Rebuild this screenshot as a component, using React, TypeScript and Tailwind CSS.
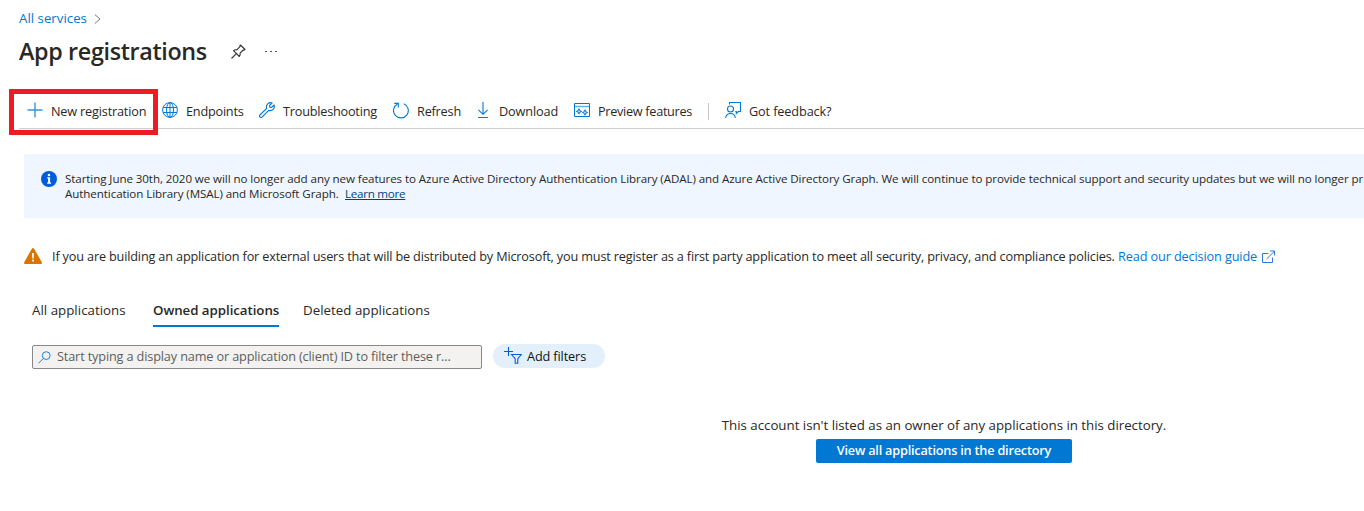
import type { ReactNode } from 'react';

type IconProps = { className?: string };

function PlusIcon() {
  return (
    <svg width="16" height="16" viewBox="0 0 16 16" stroke="#3b93dd" strokeWidth="1.4">
      <path d="M8 0.5v15M0.5 8h15" />
    </svg>
  );
}

function GlobeIcon() {
  return (
    <svg width="16" height="16" viewBox="0 0 16 16" fill="none" stroke="#0078d4" strokeWidth="1">
      <circle cx="8" cy="8" r="7.4" />
      <ellipse cx="8" cy="8" rx="3.5" ry="7.4" />
      <path d="M8 0.5v15M1.2 5.5h13.6M1.2 10.5h13.6" />
    </svg>
  );
}

function WrenchIcon() {
  return (
    <svg width="16" height="16" viewBox="0 0 16 16" fill="none" stroke="#0078d4" strokeWidth="1.1" strokeLinejoin="round">
      <path d="M13.2 0.9a4.3 4.3 0 0 0-5.5 5.5L0.9 13a1.3 1.3 0 0 0 0 1.9l0.2 0.2a1.3 1.3 0 0 0 1.9 0l6.700-6.700a4.300 4.300 0 0 0 5.400-5.500l-2.600 2.600-1.700-0.400-0.300-1.600z" />
    </svg>
  );
}

function RefreshIcon() {
  return (
    <svg width="16" height="17" viewBox="0 0 16 17" fill="none" stroke="#0078d4" strokeWidth="1.1">
      <path d="M10.8 1.7A7.4 7.4 0 1 1 4.4 2" />
      <path d="M1.3 1.4h4v4" />
    </svg>
  );
}

function DownloadIcon() {
  return (
    <svg width="16" height="16" viewBox="0 0 16 16" fill="none" stroke="#0078d4" strokeWidth="1.1">
      <path d="M8 0v12M3.4 7.8L8 12.3l4.6-4.5M3 15.5h10" />
    </svg>
  );
}

function PreviewIcon() {
  return (
    <svg width="16" height="14" viewBox="0 0 16 14" fill="none" stroke="#0078d4" strokeWidth="1">
      <path d="M0.5 0.5h15v13H0.5z" />
      <path d="M1 3.500h14" stroke="#69afe5" strokeWidth="1.500" />
      <path d="M5 5.700l0.800 1.900 1.900 0.800-1.900 0.800L5 11.100l-0.800-1.900-1.900-0.800 1.900-0.800zM11 6.800l0.800 1.900 1.900 0.800-1.900 0.800-0.800 1.900-0.800-1.900-1.900-0.800 1.900-0.800z" fill="#b4d8f3" strokeWidth="1" />
    </svg>
  );
}

function FeedbackIcon() {
  return (
    <svg width="16" height="16" viewBox="0 0 16 16" fill="none" stroke="#0078d4" strokeWidth="1.1">
      <path d="M4.5 2.5v-2h11v9h-2.2l-2 2v-2h-1" />
      <circle cx="5.5" cy="7" r="3" />
      <path d="M0.6 15.8a5 5.4 0 0 1 9.8 0" />
    </svg>
  );
}

function PinIcon() {
  return (
    <svg width="15" height="15" viewBox="0 0 15 15" fill="none" stroke="#323130" strokeWidth="1.1" strokeLinejoin="round">
      <path d="M9.5 1l4.500 4.500-0.900 0.600-0.800-0.100-3.200 3.200c0.300 1.200 0 2.400-0.800 3.300L2.500 6.700c0.900-0.800 2.100-1.100 3.300-0.800L9 2.700 8.900 1.700z" />
      <path d="M5.300 9.700L0.500 14.500" />
    </svg>
  );
}

function InfoIcon() {
  return (
    <svg className="shrink-0" width="16" height="16" viewBox="0 0 16 16">
      <circle cx="8" cy="8" r="8" fill="#015cda" />
      <circle cx="8" cy="4" r="1.25" fill="#fff" />
      <path d="M6.200 6.300h2.900v5.200h1v1.200H6.100v-1.200h1V7.500h-0.900z" fill="#fff" />
    </svg>
  );
}

function WarningIcon() {
  return (
    <svg className="shrink-0" width="18" height="16" viewBox="0 0 18 16">
      <path d="M7.900 0.700a1.300 1.300 0 0 1 2.200 0l7.700 13.500a1.200 1.200 0 0 1-1.100 1.800H1.300a1.200 1.200 0 0 1-1.100-1.800z" fill="#db7500" />
      <path d="M8 5h2l-0.300 5.600H8.300z" fill="#fff" />
      <circle cx="9" cy="12.600" r="1.050" fill="#fff" />
    </svg>
  );
}

function ExternalIcon() {
  return (
    <svg className="mt-0.5" width="14" height="14" viewBox="0 0 14 14" fill="none" stroke="#3079dc" strokeWidth="1">
      <path d="M6.500 3.500h-6v9h10V7.500M4.500 9L12.800 0.900M8 1h4.500v4.500" />
    </svg>
  );
}

function SearchIcon() {
  return (
    <svg width="13" height="13" viewBox="0 0 13 13" fill="none" stroke="#1b80d8" strokeWidth="1">
      <circle cx="8.200" cy="4.600" r="3.900" />
      <path d="M5.400 7.400L0.500 12.300" />
    </svg>
  );
}

function AddFilterIcon() {
  return (
    <svg className="-mt-0.5" width="18" height="17" viewBox="0 0 18 17" fill="none" stroke="#015cda" strokeWidth="1.100">
      <path d="M4.500 0v9M0 4.500h9" />
      <path d="M7.500 7.500h9.800l-3.500 4.200v4.500h-2.600v-4.500z" />
    </svg>
  );
}

function Chevron({ className }: IconProps) {
  return (
    <svg className={className} width="7" height="10" viewBox="0 0 7 10" fill="none" stroke="#767676">
      <path d="M0.800 0.500L6 5 0.800 9.500" />
    </svg>
  );
}

type CommandProps = { icon: ReactNode; label: string; width: string; tracking?: string };

function Command({ icon, label, width, tracking = '' }: CommandProps) {
  return (
    <button className={`flex h-6 shrink-0 items-center gap-2 whitespace-nowrap ${width}`}>
      <span className="-mt-0.5 flex w-4 shrink-0 justify-center">{icon}</span>
      <span className={tracking}>{label}</span>
    </button>
  );
}

export default function App() {
  return (
    <div className="h-[511px] w-full overflow-hidden bg-white font-['Open_Sans','Noto_Sans',sans-serif] text-[12.7px] leading-5 tracking-[-0.12px] text-[#292827]">
      <nav className="flex h-[35px] items-center pl-[19px]">
        <a className="w-[75px] whitespace-nowrap text-[13.2px] tracking-[0.04px] text-[#0078d4]">All services</a>
        <Chevron className="mt-0.5" />
      </nav>
      <header className="flex h-[33px] items-center pl-[19px]">
        <h1 className="-mt-0.5 w-[212px] whitespace-nowrap text-[23.3px] font-semibold leading-8 tracking-[-0.34px]">App registrations</h1>
        <PinIcon />
        <span className="ml-[19px] flex gap-[3.500px]">
          <i className="size-[1.500px] bg-[#555]" />
          <i className="size-[1.500px] bg-[#555]" />
          <i className="size-[1.500px] bg-[#555]" />
        </span>
      </header>

      <div className="relative mt-[21px] h-[46px] pl-[19px]">
        <div className="flex h-10 items-center border-b border-[#d2d0ce] pl-2 pt-[5px]">
          <Command icon={<PlusIcon />} label="New registration" width="w-[135px]" tracking="tracking-[-0.18px]" />
          <Command icon={<GlobeIcon />} label="Endpoints" width="w-[97px]" tracking="tracking-[-0.22px]" />
          <Command icon={<WrenchIcon />} label="Troubleshooting" width="w-[134px]" tracking="tracking-[-0.22px]" />
          <Command icon={<RefreshIcon />} label="Refresh" width="w-[82px]" tracking="tracking-[-0.2px]" />
          <Command icon={<DownloadIcon />} label="Download" width="w-[99px]" />
          <Command icon={<PreviewIcon />} label="Preview features" width="w-[134px]" tracking="tracking-[-0.3px]" />
          <span className="mr-4 h-[17px] w-px bg-[#c8c6c4]" />
          <Command icon={<FeedbackIcon />} label="Got feedback?" width="w-[110px]" />
        </div>
        <div className="absolute left-[9px] top-0 h-[46px] w-[149px] border-5 border-[#ed1c24]" />
      </div>

      <section className="ml-6 mt-[19px] flex h-16 rounded-l-[2px] bg-[#eff6ff] pl-[17px] pt-[17px]">
        <InfoIcon />
        <div className="ml-2 whitespace-nowrap text-[11.600px] leading-[15px] tracking-[-0.087px]">
          <p>Starting June 30th, 2020 we will no longer add any new features to Azure Active Directory Authentication Library (ADAL) and Azure Active Directory Graph. We will continue to provide technical support and security updates but we will no longer pr</p>
          <p className="flex">
            <span className="w-[280px]">Authentication Library (MSAL) and Microsoft Graph.</span>
            <a className="tracking-[-0.25px] text-[#004578] underline">Learn more</a>
          </p>
        </div>
      </section>

      <section className="mt-7 flex h-5 items-center whitespace-nowrap pl-6">
        <WarningIcon />
        <p className="ml-2.5 w-[1066px] tracking-[-0.167px]">If you are building an application for external users that will be distributed by Microsoft, you must register as a first party application to meet all security, privacy, and compliance policies.</p>
        <a className="w-[144px] text-[#0078d4]">Read our decision guide</a>
        <ExternalIcon />
      </section>

      <div className="mt-[34px] flex h-[27px] whitespace-nowrap pl-8 text-[13.3px] tracking-[0.02px]">
        <span className="w-[121px]">All applications</span>
        <span className="mr-6 w-[126px] border-b-2 border-[#0078d4] font-semibold tracking-[-0.05px]">Owned applications</span>
        <span>Deleted applications</span>
      </div>

      <div className="mt-[18px] flex h-6 items-center whitespace-nowrap pl-8">
        <div className="flex h-6 w-[450px] items-center rounded-[2px] border border-[#8a8886] bg-[#f3f2f1] pl-[5px] text-[#605e5c]">
          <SearchIcon />
          <span className="-mt-0.5 ml-1.5 tracking-[-0.14px]">Start typing a display name or application (client) ID to filter these r...</span>
        </div>
        <button className="-mt-0.5 ml-[11px] flex h-6 w-28 items-center rounded-full bg-[#e3f0fb] pl-[11px] text-[#111]">
          <AddFilterIcon />
          <span className="ml-[5px]">Add filters</span>
        </button>
      </div>

      <section className="ml-[524px] mt-[46px] flex flex-col items-center whitespace-nowrap">
        <p className="text-[13.3px] tracking-[-0.02px]">This account isn't listed as an owner of any applications in this directory.</p>
        <button className="mt-1 h-6 w-64 rounded-[2px] bg-[#0078d4] pb-0.5 font-semibold tracking-[-0.2px] text-white">View all applications in the directory</button>
      </section>
    </div>
  );
}
